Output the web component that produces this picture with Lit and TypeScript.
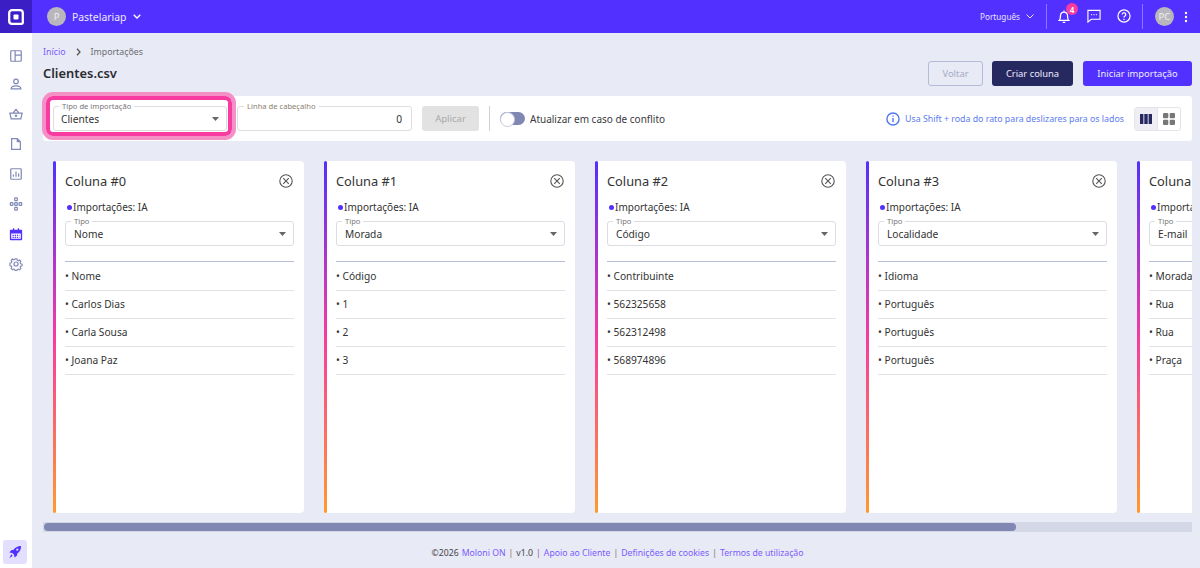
import { LitElement, html, css, svg } from "lit";
import { customElement } from "lit/decorators.js";

const cols = [
  { t: "Nome", r: ["Nome", "Carlos Dias", "Carla Sousa", "Joana Paz"] },
  { t: "Morada", r: ["Código", "1", "2", "3"] },
  { t: "Código", r: ["Contribuinte", "562325658", "562312498", "568974896"] },
  { t: "Localidade", r: ["Idioma", "Português", "Português", "Português"] },
  { t: "E-mail", r: ["Morada", "Rua", "Rua", "Praça"] },
];

const side = [
  svg`<rect x="2" y="2" width="12" height="12" rx="1"/><path d="M7 2v12M7 7h7"/>`,
  svg`<circle cx="8" cy="5" r="2.6"/><path d="M2.500 13.500c0-2.400 2.300-3.300 5.500-3.300s5.500.9 5.500 3.300z"/>`,
  svg`<path d="M1 7h14l-1.500 6.500h-11zM4.500 7 8 2.800 11.500 7"/><circle cx="8" cy="10" r=".7" fill="currentColor"/>`,
  svg`<path d="M3 1.800h6.500L13 5.300v8.900H3zM9.500 1.800v3.500H13"/>`,
  svg`<rect x="2" y="2" width="12" height="12" rx="1"/><path d="M5 11V8.500M8 11V5M11 11V7.500"/>`,
  svg`<rect x="6.500" y="1" width="3" height="3.200" rx=".7"/><rect x="1.500" y="6.500" width="3" height="3" rx=".7"/><rect x="6.500" y="6.500" width="3" height="3" rx=".7"/><rect x="11.500" y="6.500" width="3" height="3" rx=".7"/><rect x="6.500" y="11.800" width="3" height="3.200" rx=".7"/>`,
  svg`<path fill="currentColor" stroke="none" d="M2 3h2.500V1.500h1.500V3h4V1.500h1.500V3H14a1 1 0 0 1 1 1v10a1 1 0 0 1-1 1H2a1 1 0 0 1-1-1V4a1 1 0 0 1 1-1zm.5 4.500v6h11v-6z"/><path stroke-width="1.300" stroke-dasharray="1.500 1" d="M4 9.500h8M4 11.800h8"/>`,
  svg`<circle cx="8" cy="8" r="2.300"/><path d="M6.800 1.500h2.400l.4 1.900 1.300.6 1.700-1 1.600 1.700-1 1.600.6 1.400 1.900.4v2.200l-1.900.4-.6 1.400 1 1.600-1.600 1.700-1.700-1-1.300.6-.4 1.400H6.800l-.4-1.400-1.300-.6-1.700 1-1.600-1.700 1-1.600-.6-1.400-1.900-.4V6.800l1.900-.4.6-1.400-1-1.600 1.600-1.700 1.700 1 1.300-.6z" transform="translate(.8 .8) scale(.9)"/>`,
];

@customElement("app-root")
export class AppRoot extends LitElement {
  static styles = css`
    :host { display: flex; flex-direction: column; height: 568px; overflow: hidden; background: #e8eaf6; font-family: "Noto Sans", sans-serif; color: #333; font-size: 10.200px; }
    * { box-sizing: border-box; }
    svg { display: block; flex: none; }
    .top { height: 33px; flex: none; background: #5230ff; display: flex; align-items: center; color: #fff; }
    .logo { width: 32px; height: 33px; background: #3c1fc4; display: flex; align-items: center; justify-content: center; }
    .org { display: flex; align-items: center; margin-left: 15px; gap: 6px; font-size: 10.400px; color: #eceaff; }
    .avatar { width: 19px; height: 19px; border-radius: 50%; background: #b9b7bd; color: #eee; display: flex; align-items: center; justify-content: center; font-size: 9.500px; }
    .org svg { margin-left: 1px; }
    .right { margin-left: auto; display: flex; align-items: center; height: 100%; }
    .lang { font-size: 8.200px; color: #e6e3ff; margin-right: 6px; }
    .chev { margin-right: 12px; }
    .vr { width: 1px; height: 25px; background: #8f78ff; }
    .ico { position: relative; width: 30px; display: flex; justify-content: center; }
    .badge { position: absolute; left: 17px; top: -6px; width: 12px; height: 12px; border-radius: 50%; background: #f73ba0; color: #fff; font-size: 8px; font-weight: 600; display: flex; align-items: center; justify-content: center; }
    .bells { display: flex; margin: 0 3px 0 2px; }
    .user { display: flex; align-items: center; gap: 10px; padding: 0 12px 0 12px; }
    .body { flex: 1; display: flex; min-height: 0; }
    .side { width: 32px; flex: none; background: #fff; display: flex; flex-direction: column; align-items: center; padding-top: 13px; color: #8189b5; }
    .side .si { height: 16px; margin-bottom: 14px; display: flex; align-items: center; }
    .side .si:first-child { margin-top: 2px; margin-bottom: 12px; }
    .side .on { color: #5230ff; }
    .rocket { margin: auto 2px 4px 0; width: 24px; height: 24px; border-radius: 3px; background: #e3dfff; display: flex; align-items: center; justify-content: center; }
    .main { flex: 1; min-width: 0; display: flex; flex-direction: column; padding: 0 8px 0 11px; }
    .crumb { height: 15px; margin-top: 11px; display: flex; align-items: center; font-size: 8.800px; color: #6b6b72; }
    .crumb a { color: #7b5cff; }
    .crumb svg { margin: 0 10px 0 10px; }
    .head { display: flex; align-items: flex-start; height: 35px; margin-top: 2px; }
    h1 { margin: 2px 0 0; font-size: 12.900px; font-weight: 600; line-height: 20px; color: #2b2b30; }
    .btns { margin-left: auto; display: flex; }
    .btn { height: 25px; border-radius: 3px; display: flex; align-items: center; justify-content: center; font-size: 9.400px; color: #ecebff; }
    .back { width: 55px; margin-right: 9px; border: 1px solid #b5bad6; color: #a6abc6; }
    .new { width: 81px; margin-right: 10px; background: #262960; }
    .go { width: 109px; background: #5230ff; }
    .bar { height: 45px; flex: none; background: #fff; border-radius: 3px; display: flex; align-items: center; padding: 0 11px 0 10px; }
    .field { position: relative; width: 174px; height: 25px; border: 1px solid #dcdce2; border-radius: 3px; display: flex; align-items: center; padding: 0 7px; font-size: 10.200px; color: #333; }
    .field label { position: absolute; left: 5px; top: -6px; background: #fff; padding: 0 3px; font-size: 7.600px; line-height: 10px; color: #777; }
    .field svg { margin-left: auto; }
    .hl { position: absolute; left: -8px; right: -6px; top: -11px; bottom: -6px; border: 4px solid #f73ba0; border-radius: 7px; box-shadow: 0 0 0 4px #f490c6; pointer-events: none; z-index: 2; }
    .line { width: 175px; margin-left: 10px; justify-content: flex-end; padding-right: 9px; }
    .line label { left: 6px; color: #8a7f70; }
    .apply { margin-left: 10px; width: 57px; height: 25px; border-radius: 3px; background: #e2e2e2; color: #a9a9a9; font-size: 9.500px; display: flex; align-items: center; justify-content: center; }
    .bar .vr { background: #d0d0d6; margin: 0 10px 0 10px; }
    .toggle { position: relative; width: 25px; height: 13px; border-radius: 7px; background: #7f87b2; }
    .toggle::before { content: ""; position: absolute; left: 0; top: 0; width: 13px; height: 13px; border-radius: 50%; background: #fff; border: 1px solid #c7cae0; }
    .tlabel { margin-left: 5px; font-size: 10px; color: #3a3a40; }
    .info { margin-left: auto; display: flex; align-items: center; gap: 5px; color: #5b7cf0; font-size: 8.800px; }
    .seg { margin-left: 10px; display: flex; width: 47px; height: 24px; border: 1px solid #e4e4ea; border-radius: 3px; overflow: hidden; }
    .seg div { flex: 1; display: flex; align-items: center; justify-content: center; }
    .seg .cur { background: #eeeef4; border-right: 1px solid #e4e4ea; }
    .scroll { flex: none; height: 362px; margin-top: 20px; overflow: hidden; }
    .cards { display: flex; gap: 20px; padding: 0 13px 0 10px; width: max-content; }
    .card { position: relative; width: 251px; height: 352px; background: #fff; border-radius: 0 4px 4px 0; padding: 10px 10px 0 12px; }
    .card::before { content: ""; position: absolute; left: 0; top: 0; bottom: 0; width: 3px; border-radius: 2px; background: linear-gradient(180deg, #5230ff 0%, #f73ba0 50%, #ff9a2e 100%); }
    .ctitle { display: flex; align-items: center; justify-content: space-between; height: 20px; font-size: 12.800px; color: #333; padding-right: 1px; }
    .ia { display: flex; align-items: center; height: 16px; margin-top: 8px; padding-left: 2px; font-size: 10px; color: #333; gap: 1px; }
    .dot { width: 5px; height: 5px; border-radius: 50%; background: #5230ff; }
    .card .field { width: 229px; margin-top: 6px; padding-left: 8px; }
    .card .field label { left: 5px; }
    .rows { margin-top: 15px; border-top: 1px solid #b9bed8; }
    .row { height: 28px; padding-bottom: 2px; border-bottom: 1px solid #e2e2e6; display: flex; align-items: center; font-size: 10.200px; color: #333; }
    .row:first-child { height: 29px; padding-bottom: 1px; }
    .track { flex: none; height: 10px; background: #d4d7e6; padding: 1px; margin-top: -1px; }
    .thumb { width: 972px; height: 8px; border-radius: 4px; background: #7f87b2; }
    footer { flex: 1; display: flex; align-items: center; justify-content: center; padding-top: 6px; font-size: 8.700px; gap: 3px; color: #444; }
    footer a { color: #7b5cff; }
    footer i { font-style: normal; color: #8a6a6a; }
  `;

  caret() {
    return html`<svg width="7" height="4" viewBox="0 0 7 4"><path d="M0 0h7L3.500 4z" fill="#666"/></svg>`;
  }

  card(c: { t: string; r: string[] }, i: number) {
    return html`<div class="card">
      <div class="ctitle"><span>Coluna #${i}</span>
        <svg width="14" height="14" viewBox="0 0 14 14" fill="none" stroke="#555" stroke-width="1.100"><circle cx="7" cy="7" r="6.200"/><path d="M4.200 4.200l5.600 5.600M9.800 4.200l-5.600 5.600"/></svg>
      </div>
      <div class="ia"><span class="dot"></span><span>Importações: IA</span></div>
      <div class="field"><label>Tipo</label>${c.t}${this.caret()}</div>
      <div class="rows">${c.r.map((r) => html`<div class="row">• ${r}</div>`)}</div>
    </div>`;
  }

  render() {
    return html`
      <div class="top">
        <div class="logo"><svg width="16" height="16" viewBox="0 0 16 16" fill="none"><path d="M4 1.200h8A2.800 2.800 0 0 1 14.800 4v9.800a1 1 0 0 1-1 1H4A2.800 2.800 0 0 1 1.200 12V4A2.800 2.800 0 0 1 4 1.200z" stroke="#fff" stroke-width="2.300"/><rect x="5.500" y="5.500" width="5" height="5" rx=".8" fill="#fff"/></svg></div>
        <div class="org"><span class="avatar">P</span><span>Pastelariap</span>
          <svg width="8" height="5" viewBox="0 0 8 5" fill="none" stroke="#fff" stroke-width="1.300"><path d="M.7.700 4 4 7.300.700"/></svg></div>
        <div class="right">
          <span class="lang">Português</span>
          <svg class="chev" width="8" height="5" viewBox="0 0 8 5" fill="none" stroke="#e6e3ff"><path d="M.5.500 4 4 7.500.500"/></svg>
          <span class="vr"></span>
          <div class="bells">
            <div class="ico"><svg width="12" height="15" viewBox="0 0 14 16" fill="none" stroke="#fff" stroke-width="1.500"><path d="M1.500 12.500c1-1 1.300-2 1.300-4.500C2.800 5 4.500 3 7 3s4.200 2 4.200 5c0 2.500.3 3.500 1.300 4.500zM7 1v2M5.500 14.800h3"/></svg><span class="badge">4</span></div>
            <div class="ico"><svg width="14" height="14" viewBox="0 0 15 15" fill="none" stroke="#fff" stroke-width="1.200"><path d="M1 1.500h13v9.500H4.500L1 14z"/><path d="M4.500 6h1M7 6h1M9.500 6h1" stroke-width="1.400"/></svg></div>
            <div class="ico"><svg width="14" height="14" viewBox="0 0 15 15" fill="none" stroke="#fff" stroke-width="1.300"><circle cx="7.500" cy="7.500" r="6.500"/><path d="M5.600 5.800a1.900 1.900 0 1 1 2.900 1.700c-.7.400-1 .8-1 1.600M7.500 10.500v1.200"/></svg></div>
          </div>
          <span class="vr"></span>
          <div class="user"><span class="avatar">PC</span>
            <svg width="4" height="12" viewBox="0 0 4 12" fill="#fff"><circle cx="2" cy="2" r="1.200"/><circle cx="2" cy="6" r="1.200"/><circle cx="2" cy="10" r="1.200"/></svg></div>
        </div>
      </div>
      <div class="body">
        <nav class="side">
          ${side.map((p, i) => html`<div class="si ${i === 6 ? "on" : ""}"><svg width="14" height="14" viewBox="0 0 16 16" fill="none" stroke="currentColor" stroke-width="1.400">${p}</svg></div>`)}
          <div class="rocket"><svg width="14" height="14" viewBox="0 0 15 15" fill="#5230ff"><path d="M14 1c-3.500 0-6 1.200-8 4L3.500 5.500 1.500 8l3 .5 2 2 .5 3 2.500-2L10 9c2.800-2 4-4.500 4-8zM10 3.800a1.200 1.200 0 1 1 0 2.400 1.200 1.200 0 0 1 0-2.400zM3.500 10l1.500 1.500L1.500 14.200z"/></svg></div>
        </nav>
        <div class="main">
          <div class="crumb"><a>Início</a><svg width="5" height="8" viewBox="0 0 5 8" fill="none" stroke="#555" stroke-width="1.300"><path d="M1 .7 4 4 1 7.300"/></svg><span>Importações</span></div>
          <div class="head"><h1>Clientes.csv</h1>
            <div class="btns"><div class="btn back">Voltar</div><div class="btn new">Criar coluna</div><div class="btn go">Iniciar importação</div></div>
          </div>
          <div class="bar">
            <div class="field"><label>Tipo de importação</label>Clientes${this.caret()}<span class="hl"></span></div>
            <div class="field line"><label>Linha de cabeçalho</label>0</div>
            <div class="apply">Aplicar</div>
            <span class="vr"></span>
            <span class="toggle"></span><span class="tlabel">Atualizar em caso de conflito</span>
            <div class="info"><svg width="14" height="14" viewBox="0 0 15 15" fill="none" stroke="#4f78ee" stroke-width="1.500"><circle cx="7.500" cy="7.500" r="6.500"/><path d="M7.500 6.500v4.500M7.500 3.700v1.500"/></svg><span>Usa Shift + roda do rato para deslizares para os lados</span></div>
            <div class="seg">
              <div class="cur"><svg width="12" height="10" viewBox="0 0 12 10" fill="#262960"><rect width="3.400" height="10"/><rect x="4.300" width="3.400" height="10"/><rect x="8.600" width="3.400" height="10"/></svg></div>
              <div><svg width="12" height="12" viewBox="0 0 12 12" fill="#777"><rect width="5.300" height="5.300" rx="1"/><rect x="6.700" width="5.300" height="5.300" rx="1"/><rect y="6.700" width="5.300" height="5.300" rx="1"/><rect x="6.700" y="6.700" width="5.300" height="5.300" rx="1"/></svg></div>
            </div>
          </div>
          <div class="scroll"><div class="cards">${cols.map((c, i) => this.card(c, i))}</div></div>
          <div class="track"><div class="thumb"></div></div>
          <footer><span>©2026</span><a>Moloni ON</a><i>|</i><span>v1.0</span><i>|</i><a>Apoio ao Cliente</a><i>|</i><a>Definições de cookies</a><i>|</i><a>Termos de utilização</a></footer>
        </div>
      </div>`;
  }
}
